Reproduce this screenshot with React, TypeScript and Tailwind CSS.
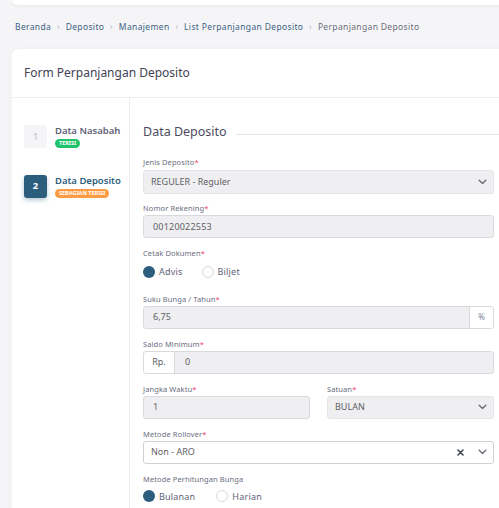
import React from "react";

const Req = () => <span className="text-[#f1416c]">*</span>;

const Label = ({ children, req = true }: { children: React.ReactNode; req?: boolean }) => (
  <div className="h-[10px] leading-[10px] text-[7.5px] text-[#6a6d80] tracking-[0.1px]">
    {children}
    {req && <Req />}
  </div>
);

const Chevron = () => (
  <svg width="9" height="6" viewBox="0 0 9 6" fill="none">
    <path d="M1.2 1.2 L4.5 4.4 L7.8 1.2" stroke="#6b6b76" strokeWidth="1.4" strokeLinecap="round" strokeLinejoin="round" />
  </svg>
);

const Radio = ({ checked, label }: { checked: boolean; label: string }) => (
  <div className="flex items-center gap-[4px]">
    {checked ? (
      <div className="w-[12px] h-[12px] rounded-full bg-[#2b5d7d]" />
    ) : (
      <div className="w-[12px] h-[12px] rounded-full border border-[#d8d8de] bg-white" />
    )}
    <span className="text-[9px] text-[#5e6278] tracking-[0.2px]">{label}</span>
  </div>
);

export default function App() {
  return (
    <div
      className="w-[499px] h-[508px] overflow-hidden bg-[#f5f5f8]"
      style={{ fontFamily: '"Noto Sans", sans-serif' }}
    >
      <div className="ml-[12px] w-[520px] h-[5px] bg-white rounded-b-[6px] shadow-[0_1px_4px_rgba(0,0,0,0.06)]" />
      <div className="h-[44px] flex items-center pl-[15px] text-[8.5px] gap-[6px] whitespace-nowrap tracking-[0.35px]">
        <span className="text-[#3d6182]">Beranda</span>
        <span className="text-[#a1a5b7] text-[7px]">›</span>
        <span className="text-[#3d6182]">Deposito</span>
        <span className="text-[#a1a5b7] text-[7px]">›</span>
        <span className="text-[#3d6182]">Manajemen</span>
        <span className="text-[#a1a5b7] text-[7px]">›</span>
        <span className="text-[#3d6182]">List Perpanjangan Deposito</span>
        <span className="text-[#a1a5b7] text-[7px]">›</span>
        <span className="text-[#6d6d7a]">Perpanjangan Deposito</span>
      </div>
      <div className="ml-[12px] w-[520px] bg-white rounded-[6px] shadow-[0_0_6px_rgba(0,0,0,0.03)]">
        <div className="h-[49px] flex items-center pl-[12px] border-b border-[#ececf3] text-[12px] text-[#3f4254]">
          Form Perpanjangan Deposito
        </div>
        <div className="flex">
          <div className="w-[118px] shrink-0 border-r border-[#ececf3] pt-[27px] pl-[12px] h-[420px]">
            <div className="flex gap-[8px]">
              <div className="w-[23px] h-[23px] rounded-[3px] bg-[#f5f5f7] flex items-center justify-center text-[9px] text-[#b5b5c3]">
                1
              </div>
              <div className="flex flex-col">
                <span className="text-[9.5px] leading-[12px] font-semibold text-[#5e6278]">Data Nasabah</span>
                <span className="mt-[2px] self-start h-[9px] px-[4px] rounded-full bg-[#1fc36b] text-white text-[5.5px] font-bold leading-[9px]">
                  TERISI
                </span>
              </div>
            </div>
            <div className="flex gap-[8px] mt-[27px]">
              <div className="w-[23px] h-[23px] rounded-[3px] bg-[#2b5d7d] flex items-center justify-center text-[9.5px] font-bold text-white shadow-[0_2px_4px_rgba(43,93,125,0.35)]">
                2
              </div>
              <div className="flex flex-col">
                <span className="text-[9.5px] leading-[12px] font-semibold text-[#2b5d7d]">Data Deposito</span>
                <span className="mt-[2px] self-start h-[9px] px-[4px] rounded-full bg-[#ff9b42] text-white text-[5.5px] font-bold leading-[9px]">
                  SEBAGIAN TERISI
                </span>
              </div>
            </div>
          </div>
          <div className="pl-[13px] pt-[25px] w-[364px]">
            <div className="flex items-center gap-[9px] h-[18px]">
              <span className="text-[12.5px] text-[#4a4b5e] whitespace-nowrap">Data Deposito</span>
              <div className="flex-1 h-px bg-[#e4e4ec] mt-[4px] -mr-[20px]" />
            </div>
            <div className="mt-[16px]">
              <Label>Jenis Deposito</Label>
              <div className="mt-[3px] h-[24px] rounded-[3px] border border-[#e4e4e8] bg-[#efeff1] flex items-center pl-[7px] pr-[6px] text-[9px] text-[#5e5e66]">
                <span className="flex-1">REGULER - Reguler</span>
                <Chevron />
              </div>
            </div>
            <div className="mt-[9px]">
              <Label>Nomor Rekening</Label>
              <div className="mt-[2px] h-[23px] rounded-[3px] border border-[#d9d9de] bg-[#efeff1] flex items-center pl-[9px] text-[9px] text-[#5e5e66] tracking-[0.2px]">
                00120022553
              </div>
            </div>
            <div className="mt-[10px]">
              <Label>Cetak Dokumen</Label>
              <div className="mt-[7px] flex items-center gap-[19px]">
                <Radio checked label="Advis" />
                <Radio checked={false} label="Biljet" />
              </div>
            </div>
            <div className="mt-[15px]">
              <Label>Suku Bunga / Tahun</Label>
              <div className="mt-[2px] h-[23px] rounded-[3px] border border-[#d9d9de] bg-[#efeff1] flex items-center text-[9px] text-[#5e5e66] overflow-hidden">
                <span className="flex-1 pl-[9px]">6,75</span>
                <span className="w-[24px] h-full bg-white border-l border-[#d9d9de] flex items-center justify-center text-[8px] text-[#7e8299]">
                  %
                </span>
              </div>
            </div>
            <div className="mt-[10px]">
              <Label>Saldo Minimum</Label>
              <div className="mt-[2px] h-[23px] rounded-[3px] border border-[#d9d9de] bg-[#efeff1] flex items-center text-[9px] text-[#5e5e66] overflow-hidden">
                <span className="w-[31px] h-full bg-white border-r border-[#d9d9de] flex items-center justify-center">
                  Rp.
                </span>
                <span className="flex-1 pl-[10px]">0</span>
              </div>
            </div>
            <div className="mt-[10px] flex gap-[17px]">
              <div className="w-[167px]">
                <Label>Jangka Waktu</Label>
                <div className="mt-[2px] h-[23px] rounded-[3px] border border-[#d9d9de] bg-[#efeff1] flex items-center pl-[9px] text-[9px] text-[#5e5e66]">
                  1
                </div>
              </div>
              <div className="flex-1">
                <Label>Satuan</Label>
                <div className="mt-[2px] h-[23px] rounded-[3px] border border-[#e4e4e8] bg-[#efeff1] flex items-center pl-[7px] pr-[6px] text-[9px] text-[#5e5e66]">
                  <span className="flex-1">BULAN</span>
                  <Chevron />
                </div>
              </div>
            </div>
            <div className="mt-[10px]">
              <Label>Metode Rollover</Label>
              <div className="mt-[2px] h-[23px] rounded-[3px] border border-[#cfcfd6] bg-white flex items-center pl-[7px] pr-[6px] text-[9px] text-[#5e5e66]">
                <span className="flex-1">Non - ARO</span>
                <svg width="7" height="7" viewBox="0 0 7 7" className="mr-[14px]">
                  <path d="M1 1 L6 6 M6 1 L1 6" stroke="#3f4254" strokeWidth="1.5" strokeLinecap="round" />
                </svg>
                <Chevron />
              </div>
            </div>
            <div className="mt-[10px]">
              <Label req={false}>Metode Perhitungan Bunga</Label>
              <div className="mt-[6px] flex items-center gap-[21px]">
                <Radio checked label="Bulanan" />
                <Radio checked={false} label="Harian" />
              </div>
            </div>
          </div>
        </div>
      </div>
    </div>
  );
}
